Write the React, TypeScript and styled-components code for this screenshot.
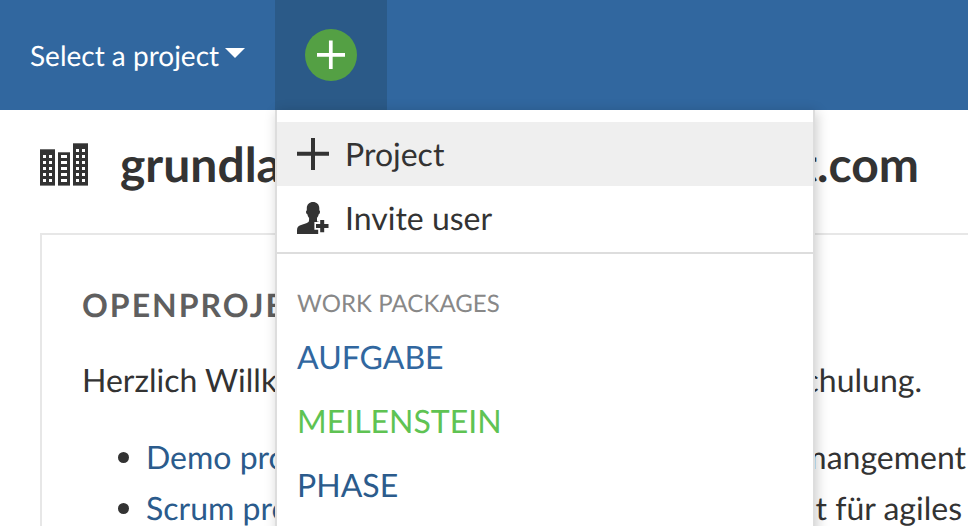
import React from 'react';
import styled, { createGlobalStyle } from 'styled-components';

const GlobalStyle = createGlobalStyle`
  * { box-sizing: border-box; }
  html, body { margin: 0; padding: 0; background: #fff; overflow: hidden; }
  body { font-family: Lato, "Liberation Sans", sans-serif; color: #333; text-rendering: geometricPrecision; }
  h1, h2, p, ul { margin: 0; padding: 0; font-weight: 400; }
`;

const Page = styled.div`
  position: relative;
  width: 968px;
  height: 526px;
  overflow: hidden;
`;

const TopBar = styled.header`
  display: flex;
  height: 110px;
  background: #31679f;
`;

const ProjectSelect = styled.button`
  display: flex;
  align-items: center;
  gap: 6px;
  width: 275px;
  padding: 0 0 0 30px;
  border: 0;
  background: none;
  color: #fff;
  font: 400 28px/40px Lato, sans-serif;
  text-rendering: geometricPrecision;
  white-space: nowrap;

  svg { margin-top: -4px; }
`;

const AddButton = styled.button`
  display: flex;
  align-items: center;
  justify-content: center;
  width: 112px;
  padding: 0;
  border: 0;
  background: #2b5a88;
`;

const Content = styled.main`
  width: 1100px;
  padding: 26px 0 0 40px;
`;

const Heading = styled.div`
  display: flex;
  align-items: center;
  height: 58px;
  gap: 32px;

  svg { margin-top: -2px; }
`;

const SplitLine = styled.div<{ $width: number }>`
  display: flex;
  justify-content: space-between;
  width: ${({ $width }) => $width}px;
  white-space: nowrap;
`;

const Title = styled.h1`
  font-size: 48px;
  line-height: 58px;
  font-weight: 700;
`;

const Panel = styled.section`
  margin-top: 39px;
  padding: 50px 0 0 40px;
  height: 400px;
  border: 2px solid #e7e7e7;
`;

const PanelTitle = styled.h2`
  font-size: 32px;
  line-height: 40px;
  font-weight: 700;
  letter-spacing: 2px;
  color: #5f5f5f;
  white-space: nowrap;
`;

const Intro = styled.p`
  margin-top: 35px;
  font-size: 32px;
  line-height: 40px;
`;

const ProjectList = styled.ul`
  margin-top: 31px;
  list-style: none;
  font-size: 32px;
  line-height: 51px;
`;

const ProjectItem = styled.li`
  display: flex;
  align-items: center;
  height: 51px;
  padding-left: 36px;
  gap: 17px;
`;

const Bullet = styled.span`
  width: 11px;
  height: 11px;
  margin-top: 2px;
  border-radius: 50%;
  background: #333;
`;

const ProjectLink = styled.a`
  color: #2b5b8c;
`;

const Menu = styled.nav`
  position: absolute;
  top: 110px;
  left: 275px;
  width: 540px;
  height: 440px;
  padding-top: 12px;
  background: #fff;
  border: solid #ddd;
  border-width: 0 2px;
  box-shadow: 2px 2px 12px rgba(0, 0, 0, 0.2);
`;

const MenuItem = styled.a<{ $active?: boolean; $color?: string }>`
  display: flex;
  align-items: center;
  gap: 16px;
  height: 64px;
  padding: 0 20px;
  font-size: 32px;
  line-height: 64px;
  color: ${({ $color }) => $color ?? '#333'};
  background: ${({ $active }) => ($active ? '#efefef' : 'transparent')};
`;

const Divider = styled.div`
  height: 2px;
  margin: 2px 0 35px;
  background: #ddd;
`;

const GroupLabel = styled.div`
  height: 36px;
  padding-left: 20px;
  font-size: 24px;
  line-height: 30px;
  letter-spacing: 0.06px;
  color: #888;
`;

const DownArrow = () => (
  <svg width="20" height="10" viewBox="0 0 20 10" fill="#fff">
    <path d="M0 0H20L10 10Z" />
  </svg>
);

const AddCircle = () => (
  <svg width="52" height="52" viewBox="0 0 52 52">
    <circle cx="26" cy="26" r="26" fill="#54a044" />
    <path d="M12 25.8H40M25.8 11.5V40" stroke="#fff" strokeWidth="3.7" />
  </svg>
);

const PlusIcon = () => (
  <svg width="32" height="32" viewBox="0 0 32 32">
    <path d="M0 15.8H32M16 0V32" stroke="#333" strokeWidth="4" />
  </svg>
);

const InviteIcon = () => (
  <svg width="32" height="32" viewBox="0 0 32 32" fill="#333">
    <path d="M16 0C19.6 0 22.3 2.4 22.3 6.2V8.4C23.3 8.5 23.1 10.3 22.7 11.2C22.4 12 22 12.1 21.7 12.2C21.4 14 20.6 15.1 20 15.8V19.5H21.5V20H17.4V27.8H21.2V32H0V28.4C0 25.5 1.1 24.2 3.4 23.3C6 22.3 9.9 21.4 11.4 20.1C12.1 19.4 12.1 18 12.1 15.8C11.2 15 10.6 13.8 10.4 12.2C10 12.1 9.6 11.9 9.3 11.2C8.9 10.1 8.9 8.5 9.8 8.4V6.2C9.8 2.4 12.5 0 16 0Z" />
    <path d="M23.2 17.9H27.2V22H31.5V26H27.2V30.2H23.2V26H19V22H23.2Z" />
  </svg>
);

const buildings = [
  { x: 0, top: 6, width: 15, windows: [3, 9], size: 3, first: 12 },
  { x: 18, top: 9, width: 12, windows: [3], size: 6, first: 12 },
  { x: 33, top: 0, width: 15, windows: [3, 9], size: 3, first: 6 },
];

const BuildingsIcon = () => (
  <svg width="48" height="43" viewBox="0 0 48 43">
    {buildings.map((b) => (
      <g key={b.x}>
        <rect x={b.x} y={b.top + 0.3} width={b.width} height={42.3 - b.top} fill="#333" />
        {[6, 12, 18, 24, 30, 36]
          .filter((y) => y >= b.first)
          .flatMap((y) =>
            b.windows.map((x) => (
              <rect key={`${x}-${y}`} x={b.x + x} y={y} width={b.size} height="3" fill="#fff" />
            )),
          )}
      </g>
    ))}
  </svg>
);

const projects = [
  { name: 'Demo pro', end: 'mangement', width: 820 },
  { name: 'Scrum pro', end: 't für agiles', width: 816 },
];

const types = [
  { name: 'AUFGABE', color: '#31679f' },
  { name: 'MEILENSTEIN', color: '#5fc353' },
  { name: 'PHASE', color: '#2b5b8c' },
];

export default function App() {
  return (
    <>
      <GlobalStyle />
      <Page>
        <TopBar>
          <ProjectSelect>
            Select a project
            <DownArrow />
          </ProjectSelect>
          <AddButton aria-label="Add">
            <AddCircle />
          </AddButton>
        </TopBar>
        <Content>
          <Heading>
            <BuildingsIcon />
            <Title>
              <SplitLine $width={799}>
                <span>grundla</span>
                <span>t.com</span>
              </SplitLine>
            </Title>
          </Heading>
          <Panel>
            <PanelTitle>OPENPROJE</PanelTitle>
            <Intro>
              <SplitLine as="span" $width={840}>
                <span>Herzlich Willk</span>
                <span>chulung.</span>
              </SplitLine>
            </Intro>
            <ProjectList>
              {projects.map((p) => (
                <ProjectItem key={p.name}>
                  <Bullet />
                  <SplitLine $width={p.width}>
                    <ProjectLink>{p.name}</ProjectLink>
                    <span>{p.end}</span>
                  </SplitLine>
                </ProjectItem>
              ))}
            </ProjectList>
          </Panel>
        </Content>
        <Menu>
          <MenuItem $active>
            <PlusIcon />
            Project
          </MenuItem>
          <MenuItem>
            <InviteIcon />
            Invite user
          </MenuItem>
          <Divider />
          <GroupLabel>WORK PACKAGES</GroupLabel>
          {types.map((t) => (
            <MenuItem key={t.name} $color={t.color}>
              {t.name}
            </MenuItem>
          ))}
        </Menu>
      </Page>
    </>
  );
}
